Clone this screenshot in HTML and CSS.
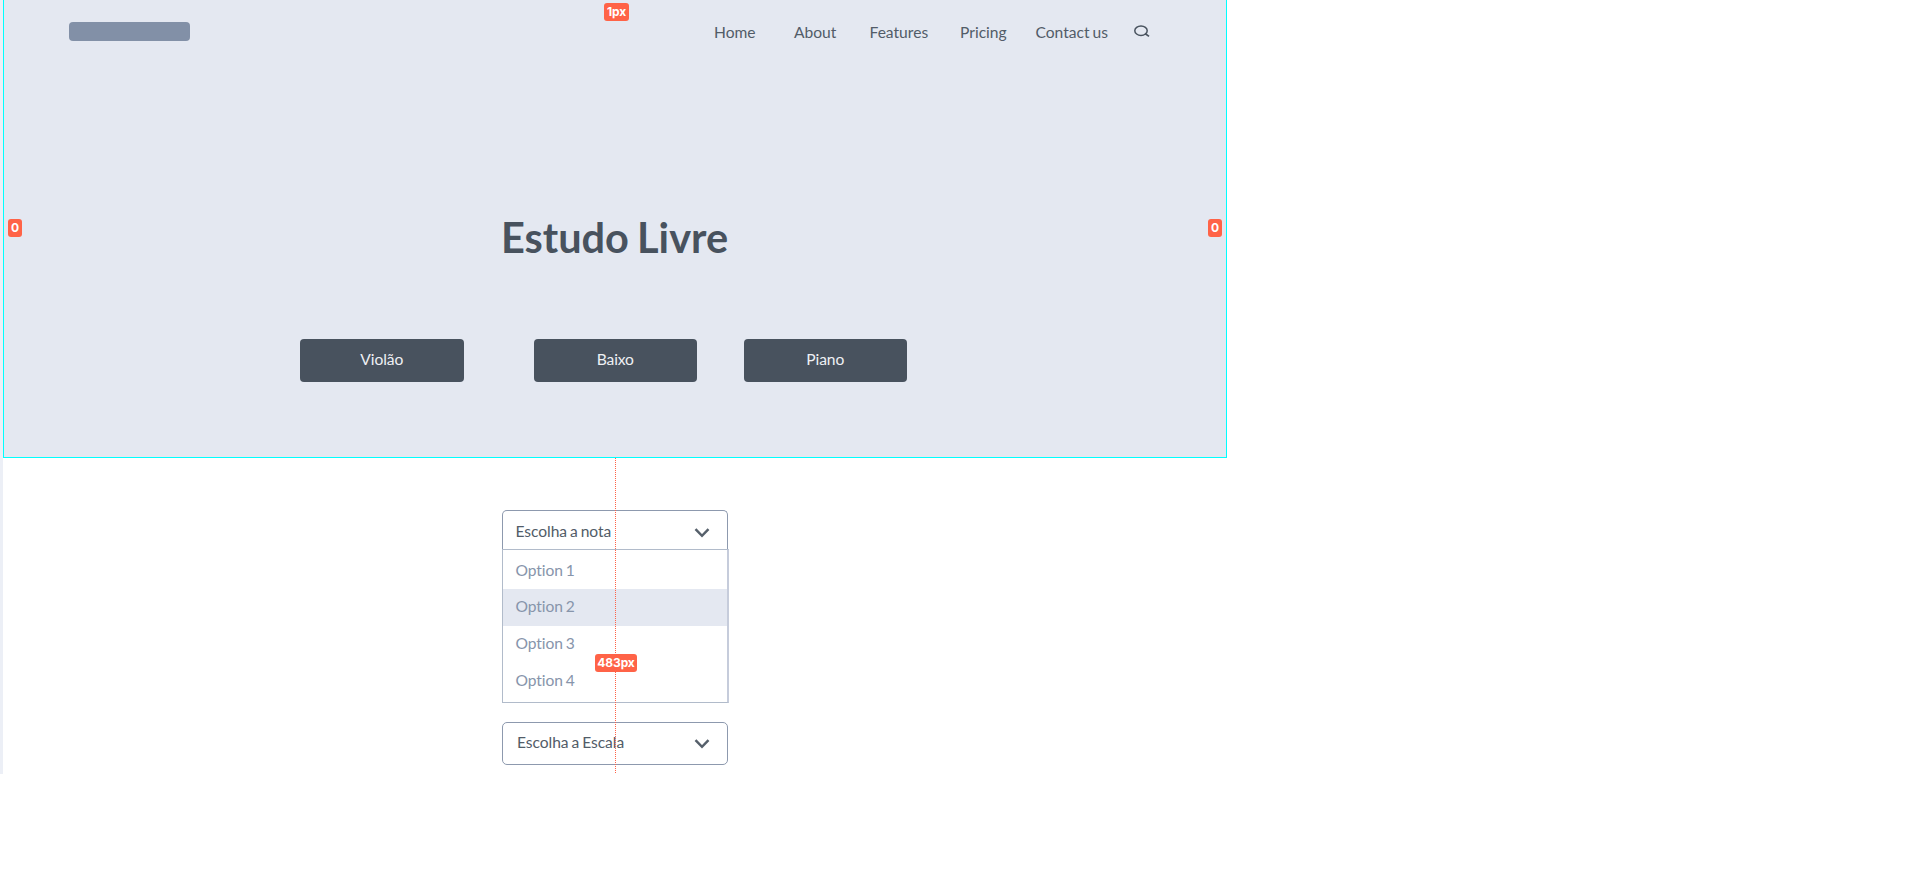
FILE: index.html
```
<!DOCTYPE html>
<html lang="pt">
<head>
<meta charset="utf-8">
<title>Estudo Livre</title>
<link rel="stylesheet" href="styles.css">
</head>
<body>
<div class="canvas">
  <header class="hero">
    <nav class="nav">
      <span class="logo"></span>
      <a>Home</a><a>About</a><a>Features</a><a>Pricing</a><a>Contact us</a>
      <svg class="search" width="17" height="13" viewBox="0 0 17 13" fill="none" stroke="#48525e"><ellipse cx="7" cy="5.7" rx="6.2" ry="4.7" stroke-width="1.5"/><path d="M11 8.5L15 11.4" stroke-width="1.7"/></svg>
    </nav>
    <h1 class="title">Estudo Livre</h1>
    <div class="buttons">
      <button class="btn">Violão</button>
      <button class="btn">Baixo</button>
      <button class="btn">Piano</button>
    </div>
    <span class="badge badge-top">1px</span>
    <span class="badge badge-left">0</span>
    <span class="badge badge-right">0</span>
  </header>
  <main class="form">
    <div class="select select-open"><span>Escolha a nota</span>
      <svg width="16" height="10" viewBox="0 0 16 10" fill="none" stroke="#56606b" stroke-width="2.5"><path d="M1.5 1.2L8 7.8L14.5 1.2"/></svg>
    </div>
    <ul class="options">
      <li>Option 1</li>
      <li class="active">Option 2</li>
      <li>Option 3</li>
      <li>Option 4</li>
    </ul>
    <div class="select select-scale"><span>Escolha a Escala</span>
      <svg width="16" height="10" viewBox="0 0 16 10" fill="none" stroke="#56606b" stroke-width="2.5"><path d="M1.5 1.2L8 7.8L14.5 1.2"/></svg>
    </div>
    <span class="guide"></span>
    <span class="badge badge-guide">483px</span>
  </main>
</div>
</body>
</html>
```
FILE: styles.css
```
* { box-sizing: border-box; }
body {
  margin: 0; background: #fff; color: #525c68;
  font-family: Lato, sans-serif; font-size: 15.6px; word-spacing: -1px;
  font-variant-ligatures: none;
}
.canvas { width: 1227px; height: 774px; border-left: 3px solid #eceff6; }
.hero { position: relative; height: 458px; background: #e4e8f1; border: 1px solid #0ff; border-top: 0; }
.nav {
  display: grid;
  grid-template-columns: 645px 80px 75.5px 90.5px 75.5px 98.5px 17px;
  padding: 21px 0 0 65px;
  line-height: 22px;
}
.logo { width: 121px; height: 19px; margin-top: 1px; border-radius: 4px; background: #8290a7; }
.search { margin-top: 4px; }
.title {
  margin: 167px 0 0 -1px; text-align: center; font-size: 41.5px; line-height: 54px; font-weight: 700;
  color: #48525e; letter-spacing: 0; word-spacing: -2px;
}
.buttons { display: flex; padding: 75px 0 0 296px; }
.btn {
  width: 163.5px; height: 42.5px; padding: 0 0 3px; border: 0; border-radius: 4px;
  background: #48525e; color: #eef0f4; font: 15.6px Lato, sans-serif; letter-spacing: -0.1px;
}
.btn:nth-child(2) { margin: 0 46.5px 0 70px; }
.form { position: relative; height: 316px; padding: 52px 0 0 499px; }
.select {
  display: flex; justify-content: space-between; align-items: center;
  width: 226px; height: 43px; padding: 0 17px 0 12.5px;
  border: 1px solid #8d99ae; border-radius: 5px; background: #fff;
}
.select-open { height: 39px; border-bottom: 0; border-radius: 5px 5px 0 0; letter-spacing: -0.05px; }
.select-open span { margin-top: 1px; }
.select-open svg { margin-top: 5px; }
.select-scale { margin-top: 19px; padding-left: 14px; letter-spacing: -0.05px; }
.select-scale span { margin-top: -3px; }
.select-scale svg { margin-top: 1px; }
.options {
  width: 227px; height: 154px; margin: 0; padding: 2.6px 0 0; list-style: none;
  border: 1px solid #b1bbca; border-right-width: 2px; border-right-color: #c6ccdb; color: #8795ab;
  letter-spacing: -0.1px;
}
.options li { height: 36.8px; padding-left: 12.5px; line-height: 35px; }
.options .active { background: #e4e8f1; line-height: 34px; }
.guide {
  position: absolute; left: 612px; top: 0; width: 1px; height: 316px;
  background: repeating-linear-gradient(#ff6347 0 1px, transparent 1px 2px);
}
.badge {
  position: absolute; height: 18px; border-radius: 3px; background: #ff6347; color: #fff;
  font: 700 12px/18px Inter, sans-serif; letter-spacing: -0.1px; text-align: center;
}
.badge-top { left: 600px; top: 3px; width: 25px; }
.badge-left { left: 4px; top: 219px; width: 14px; }
.badge-right { left: 1204px; top: 219px; width: 14px; }
.badge-guide { left: 592px; top: 196px; width: 42px; }
```
